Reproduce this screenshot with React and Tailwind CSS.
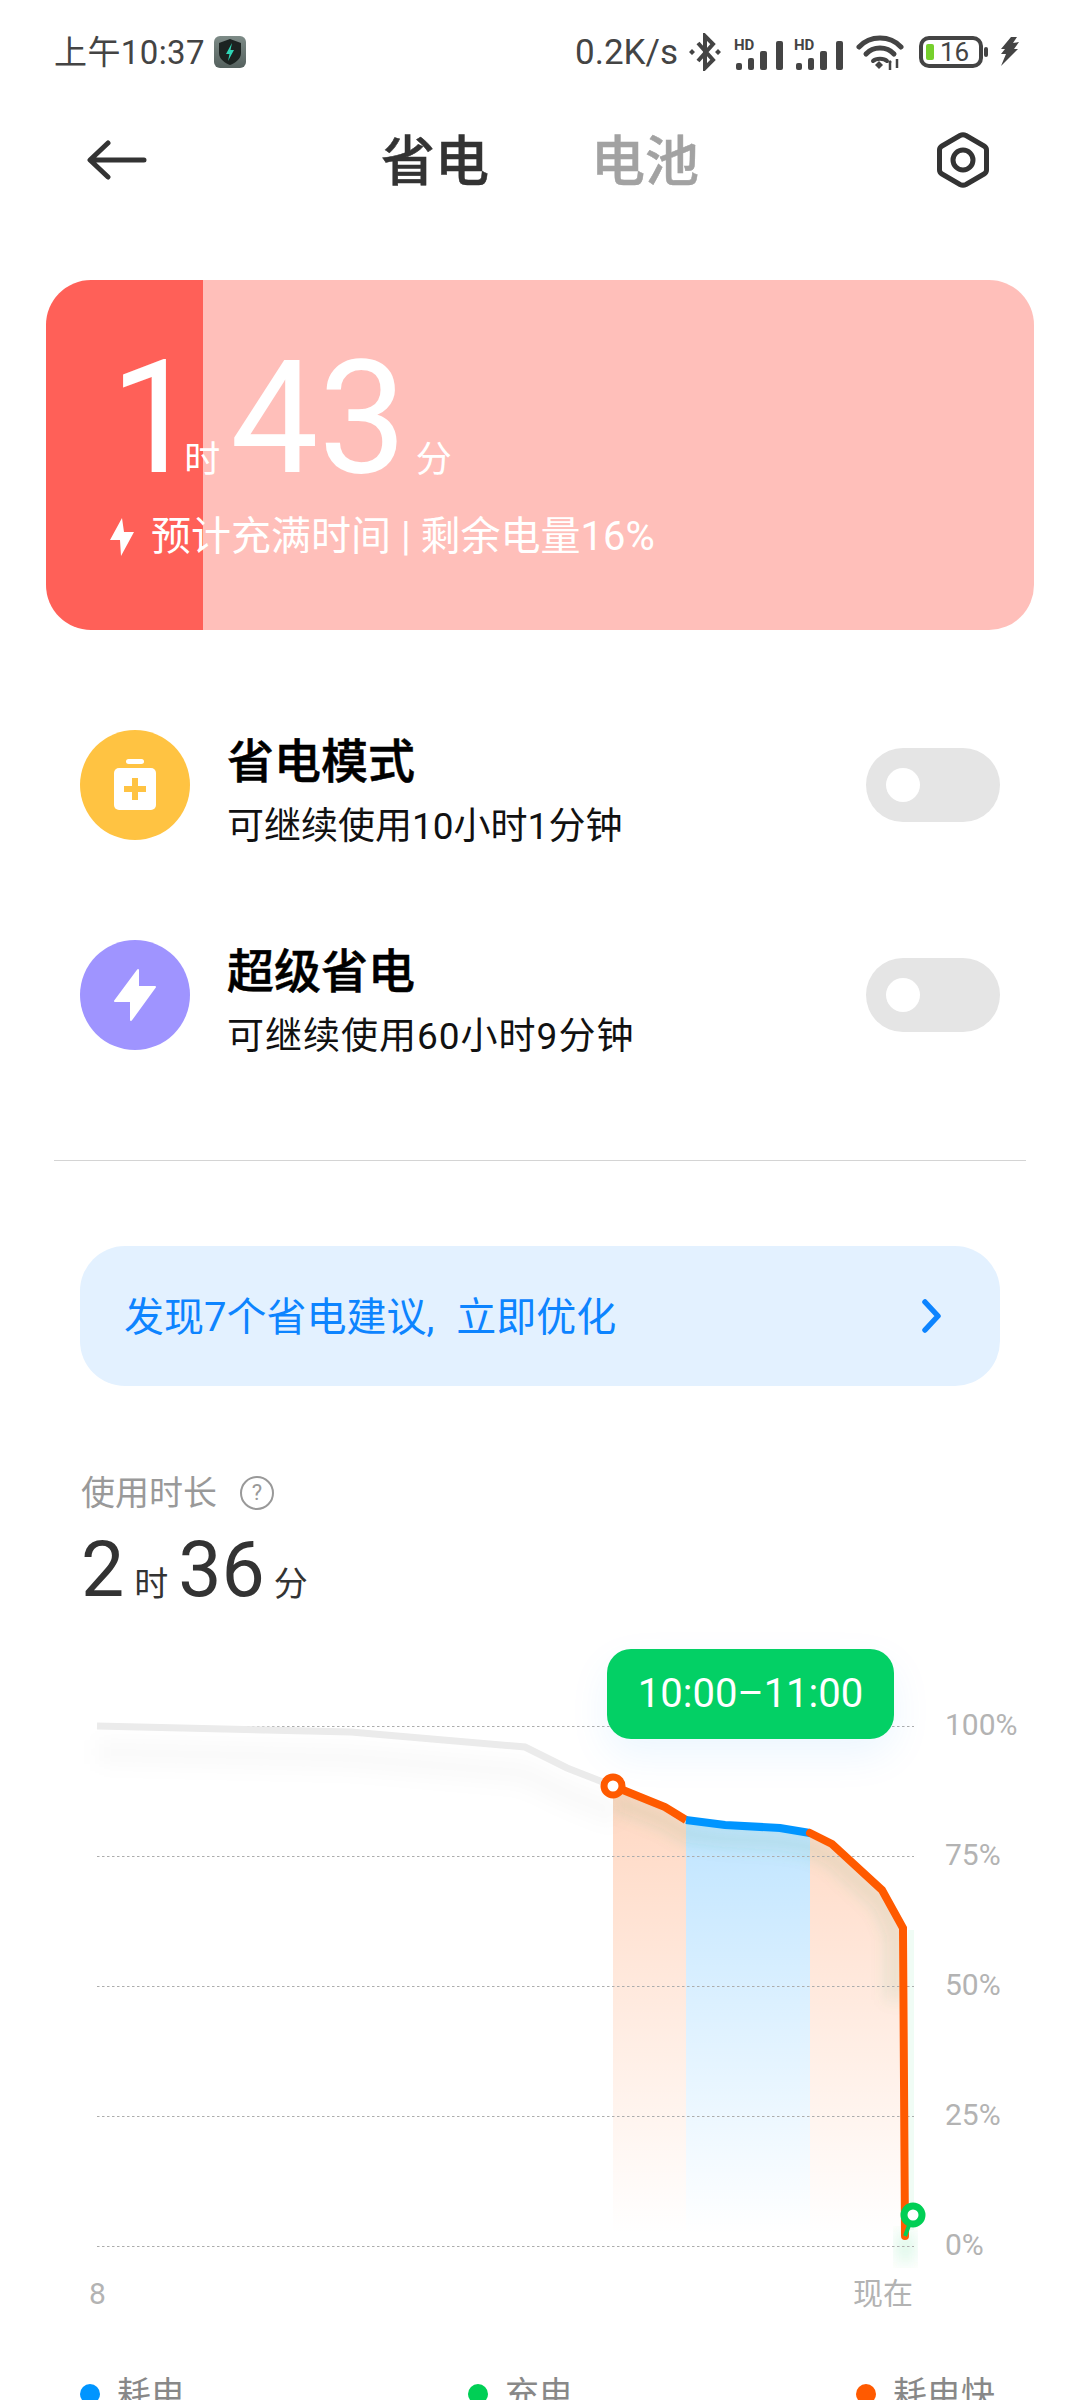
import { useId } from 'react';

const axisLabels = ['100%', '75%', '50%', '25%', '0%'];
const gridLines = [1726, 1856, 1986, 2116, 2246];
const legend = [
  { label: '耗电', dot: 'bg-[#0095ff]' },
  { label: '充电', dot: 'bg-[#00cf55]' },
  { label: '耗电快', dot: 'bg-[#ff5a00]' },
];

function SignalIcon() {
  return (
    <svg width="50" height="40" viewBox="0 -6 50 40" className="block">
      <text x="0" y="12" fontSize="15" fontWeight="700" fill="#444" fontFamily="Roboto">HD</text>
      <rect x="2" y="25" width="6" height="7" rx="2" fill="#444" />
      <rect x="14" y="20" width="6" height="12" rx="2" fill="#444" />
      <rect x="26" y="13" width="7" height="19" rx="2" fill="#444" />
      <rect x="42" y="3" width="7" height="29" rx="2" fill="#444" />
    </svg>
  );
}

function StatusBar() {
  const id = useId();
  return (
    <div className="flex h-[104px] items-center pl-[54px] text-[#444]">
      <span className="text-[33px] leading-none tracking-[0.4px]">上午10:37</span>
      <svg width="32" height="32" viewBox="0 0 32 32" className="ml-[9px] block">
        <defs>
          <linearGradient id={id} x1="0" y1="0" x2="0" y2="1">
            <stop offset="0" stopColor="#7d8b87" />
            <stop offset="1" stopColor="#55615e" />
          </linearGradient>
        </defs>
        <rect width="32" height="32" rx="6" fill={`url(#${id})`} />
        <path d="M16 3 L27 7 V17 C27 23 21 27 16 29 C11 27 5 23 5 17 V7 Z" fill="#1c2321" />
        <path d="M18 7 L12 18 H15.5 L14 25 L20 14 H16.5 Z" fill="#2fd5b5" />
      </svg>
      <span className="ml-[329px] text-[35px] leading-none">0.2K/s</span>
      <svg width="36" height="38" viewBox="-18 -19 36 38" className="ml-[9px] block">
        <path d="M-7 -9 L8 8 L0 16 V-16 L8 -8 L-7 9" fill="none" stroke="#444" strokeWidth="4" />
        <path d="M-16 0 L-13 -3 L-10 0 L-13 3 Z M10 0 L13 -3 L16 0 L13 3 Z" fill="#444" />
      </svg>
      <div className="ml-[11px]"><SignalIcon /></div>
      <div className="ml-[10px]"><SignalIcon /></div>
      <svg width="48" height="36" viewBox="0 0 48 36" className="ml-[12px] block">
        <path d="M3 13 C14 1 34 1 45 13" fill="none" stroke="#444" strokeWidth="5" strokeLinecap="round" />
        <path d="M10 20 C17 12 31 12 38 20" fill="none" stroke="#444" strokeWidth="5" strokeLinecap="round" />
        <path d="M17 27 C20 24 28 24 31 27" fill="none" stroke="#444" strokeWidth="4" strokeLinecap="round" />
        <path d="M19 31 L23 27 L27 31 L23 35 Z" fill="#444" />
        <path d="M34 36 V27 M33 29 L35 27 M41 25 V34" stroke="#444" strokeWidth="2.5" fill="none" />
      </svg>
      <svg width="70" height="32" viewBox="0 0 70 32" className="ml-[15px] block">
        <rect x="2" y="2" width="60" height="28" rx="8" fill="none" stroke="#444" strokeWidth="4" />
        <rect x="7" y="8" width="8" height="16" rx="2" fill="#76d02c" />
        <text x="21" y="25" fontSize="26" fill="#444" fontFamily="Roboto">16</text>
        <rect x="65" y="11" width="4" height="10" rx="2" fill="#444" />
      </svg>
      <svg width="20" height="30" viewBox="0 0 20 30" className="ml-[10px] block">
        <path d="M12 0 L18 0 L14 6 L20 5 L15 12 L19 12 L2 29 L7 17 L2 17 L6 12 L2 12 Z" fill="#444" />
      </svg>
    </div>
  );
}

function Header() {
  return (
    <div className="flex h-[112px] items-center justify-between pl-[86px] pr-[90px]">
      <svg width="62" height="40" viewBox="0 0 62 40" className="block">
        <path d="M58 20 H5 M22 3 L4 20 L22 37" fill="none" stroke="#333" strokeWidth="5" strokeLinecap="round" strokeLinejoin="round" />
      </svg>
      <div className="ml-[-4px] mt-[5px] flex gap-[102px] text-[54px] leading-none [-webkit-text-stroke:0.5px]">
        <span className="font-medium text-[#333]">省电</span>
        <span className="font-medium text-[#a2a2a2]">电池</span>
      </div>
      <svg width="54" height="58" viewBox="0 0 54 58" className="block">
        <path d="M24 4.5 Q27 3 30 4.5 L48 15 Q50.500 16.500 50.500 19 V39 Q50.500 41.500 48 43 L30 53.500 Q27 55 24 53.500 L6 43 Q3.500 41.500 3.500 39 V19 Q3.500 16.500 6 15 Z" fill="none" stroke="#333" strokeWidth="5" />
        <circle cx="27" cy="29" r="10" fill="none" stroke="#333" strokeWidth="5" />
      </svg>
    </div>
  );
}

function TimeCard() {
  return (
    <div className="mx-[46px] mt-[64px] h-[350px] rounded-[45px] bg-[linear-gradient(90deg,#ff6058_157px,#ffbfba_157px)] pl-[64px] pt-[60px] text-white">
      <div className="flex items-baseline">
        <span className="text-[157px] leading-none">1</span>
        <span className="ml-[-14px] text-[36px] leading-none">时</span>
        <span className="ml-[10px] text-[157px] leading-none">43</span>
        <span className="ml-[9px] text-[36px] leading-none">分</span>
      </div>
      <div className="mt-[20px] flex items-center">
        <svg width="24" height="38" viewBox="0 0 24 38" className="block">
          <path d="M12 0 L0 22 H10 L11 38 L24 14 H14 Z" fill="#fff" />
        </svg>
        <span className="ml-[17px] text-[40px] leading-none">预计充满时间 | 剩余电量16%</span>
      </div>
    </div>
  );
}

function ModeRow({ title, sub, subClass, bg, children }) {
  return (
    <div className="flex h-[110px] items-center pl-[80px] pr-[80px]">
      <div className={`flex h-[110px] w-[110px] shrink-0 items-center justify-center rounded-full ${bg}`}>
        {children}
      </div>
      <div className="ml-[37px] flex-1 self-start pt-[5px]">
        <div className="text-[47px] font-medium leading-[54px] text-black [-webkit-text-stroke:0.5px]">{title}</div>
        <div className={`mt-[16px] text-[37px] leading-[44px] text-[#111] ${subClass}`}>{sub}</div>
      </div>
      <div className="flex h-[74px] w-[134px] items-center rounded-[37px] bg-[#e5e5e5] pl-[20px]">
        <div className="h-[34px] w-[34px] rounded-full bg-white" />
      </div>
    </div>
  );
}

function Chart() {
  const fill1 = useId();
  const fill2 = useId();
  const blur = useId();
  const soft = useId();
  const clip = useId();
  const orangeA = '613,1786 665,1807 686,1820 686,2240 613,2240';
  const blue = '686,1820 725,1825 780,1828 810,1833 810,2240 686,2240';
  const orangeB = '810,1833 832,1844 882,1890 903,1928 905,2240 810,2240';
  return (
    <div className="relative flex h-[630px] items-start">
      <svg width="940" height="630" viewBox="0 1640 940 630" className="block shrink-0">
        <defs>
          <linearGradient id={fill1} gradientUnits="userSpaceOnUse" x1="0" y1="1790" x2="0" y2="2235">
            <stop offset="0" stopColor="#ff5a00" stopOpacity="0.24" />
            <stop offset="1" stopColor="#ff5a00" stopOpacity="0" />
          </linearGradient>
          <linearGradient id={fill2} gradientUnits="userSpaceOnUse" x1="0" y1="1820" x2="0" y2="2235">
            <stop offset="0" stopColor="#0095ff" stopOpacity="0.25" />
            <stop offset="1" stopColor="#0095ff" stopOpacity="0" />
          </linearGradient>
          <filter id={blur} x="-20%" y="-20%" width="140%" height="140%">
            <feGaussianBlur stdDeviation="8" />
          </filter>
          <filter id={soft} x="-20%" y="-200%" width="140%" height="500%">
            <feGaussianBlur stdDeviation="10" />
          </filter>
          <clipPath id={clip}>
            <polygon points="613,1786 665,1807 686,1820 725,1825 780,1828 810,1833 832,1844 882,1890 903,1928 905,2240 613,2240" />
          </clipPath>
        </defs>

        <polyline points="97,1752 351,1758 525,1773 567,1794 620,1815" fill="none" stroke="#000" strokeOpacity="0.025" strokeWidth="24" filter={`url(#${soft})`} />

        <polygon points={orangeA} fill={`url(#${fill1})`} />
        <polygon points={blue} fill={`url(#${fill2})`} />
        <polygon points={orangeB} fill={`url(#${fill1})`} />

        <g clipPath={`url(#${clip})`}>
          <polyline points="613,1800 665,1821 686,1834 725,1839 780,1842 810,1847 832,1858 882,1904 895,1935 895,2000" fill="none" stroke="#2f9a50" strokeOpacity="0.12" strokeWidth="16" filter={`url(#${blur})`} />
        </g>

        <rect x="908" y="1930" width="6" height="300" fill="#00cf55" fillOpacity="0.06" />
        <rect x="897" y="2232" width="17" height="30" fill="#00cf55" fillOpacity="0.14" filter={`url(#${blur})`} />

        {gridLines.map((y) => (
          <line key={y} x1="97" x2="914" y1={y + 0.5} y2={y + 0.5} stroke="#adadad" strokeWidth="1" strokeDasharray="2.500 2.500" />
        ))}

        <polyline points="97,1726 351,1732 525,1747 567,1768 613,1786" fill="none" stroke="#ebebeb" strokeWidth="7" />
        <polyline points="613,1786 665,1807 686,1820" fill="none" stroke="#ff5a00" strokeWidth="8" />
        <polyline points="686,1820 725,1825 780,1828 810,1833" fill="none" stroke="#0095ff" strokeWidth="8" />
        <polyline points="810,1833 832,1844 882,1890 903,1928 905,2236" fill="none" stroke="#ff5a00" strokeWidth="8" strokeLinecap="round" />
        <path d="M905 2236 L913 2215" stroke="#00cf55" strokeWidth="4" />
        <circle cx="613" cy="1786" r="9" fill="#fff" stroke="#ff5a00" strokeWidth="7" />
        <circle cx="913" cy="2215" r="9" fill="#fff" stroke="#00cf55" strokeWidth="7" />
      </svg>

      <div className="ml-[5px] mt-[20px] flex flex-col text-[30px] text-[#b3b3b3]">
        {axisLabels.map((label) => (
          <div key={label} className="flex h-[130px] items-center leading-none">{label}</div>
        ))}
      </div>

      <div className="absolute left-[607px] top-[9px] flex h-[90px] w-[287px] items-center justify-center rounded-[24px] bg-[#03d065] text-[40px] text-white shadow-[0_16px_40px_rgba(0,140,255,0.08)]">
        10:00–11:00
      </div>
    </div>
  );
}

export default function App() {
  return (
    <div className="h-[2400px] w-[1080px] overflow-hidden bg-white font-[Roboto,'Noto_Sans_CJK_SC',sans-serif]">
      <StatusBar />
      <Header />
      <TimeCard />

      <div className="mt-[100px] flex flex-col gap-[100px]">
        <ModeRow title="省电模式" sub="可继续使用10小时1分钟" subClass="" bg="bg-[#ffc342]">
          <svg width="42" height="52" viewBox="0 0 42 52" className="block">
            <rect x="12" y="0" width="18" height="5" rx="2.500" fill="#fff" />
            <rect x="0" y="9" width="42" height="42" rx="5" fill="#fff" />
            <path d="M21 19 V41 M10 30 H32" stroke="#ffc342" strokeWidth="6" />
          </svg>
        </ModeRow>
        <ModeRow title="超级省电" sub="可继续使用60小时9分钟" subClass="tracking-[1px]" bg="bg-[#9f94ff]">
          <svg width="110" height="110" viewBox="0 0 110 110" className="block">
            <path d="M58 30 L35 61 H51 V80 L75 47 H58 Z" fill="#fff" stroke="#fff" strokeWidth="2" strokeLinejoin="round" />
          </svg>
        </ModeRow>
      </div>

      <div className="mx-[54px] mt-[110px] h-[1px] bg-[#d4d4d4]" />

      <div className="mx-[80px] mt-[85px] flex h-[140px] items-center justify-between rounded-[45px] bg-[#e3f1ff] pl-[44px] pr-[57px] text-[40px] text-[#0d84ff]">
        <span className="mt-[3px] leading-none [word-spacing:12px]">发现7个省电建议, 立即优化</span>
        <svg width="22" height="34" viewBox="0 0 22 34" className="block">
          <path d="M4 3 L17 17 L4 31" fill="none" stroke="#0d84ff" strokeWidth="5.500" strokeLinecap="round" strokeLinejoin="round" />
        </svg>
      </div>

      <div className="ml-[81px] mt-[90px] flex h-[34px] items-center">
        <span className="text-[34px] leading-none text-[#999]">使用时长</span>
        <div className="ml-[23px] flex h-[34px] w-[34px] items-center justify-center rounded-full border-2 border-[#999] text-[22px] leading-none text-[#999]">?</div>
      </div>

      <div className="ml-[81px] mt-[21px] flex h-[78px] items-baseline text-[#333]">
        <span className="text-[77px] leading-[78px]">2</span>
        <span className="ml-[10px] text-[34px] leading-none">时</span>
        <span className="ml-[10px] text-[77px] leading-[78px]">36</span>
        <span className="ml-[9px] text-[34px] leading-none">分</span>
      </div>

      <div className="mt-[31px]">
        <Chart />
      </div>

      <div className="ml-[89px] flex h-[48px] w-[824px] items-center justify-between text-[30px] leading-none text-[#b3b3b3]">
        <span>8</span>
        <span>现在</span>
      </div>

      <div className="mt-[59px] flex pl-[80px]">
        {legend.map((item) => (
          <div key={item.label} className="flex w-[388px] shrink-0 items-center">
            <div className={`h-[20px] w-[20px] rounded-full ${item.dot}`} />
            <span className="ml-[17px] text-[34px] leading-none text-[#888]">{item.label}</span>
          </div>
        ))}
      </div>
    </div>
  );
}
